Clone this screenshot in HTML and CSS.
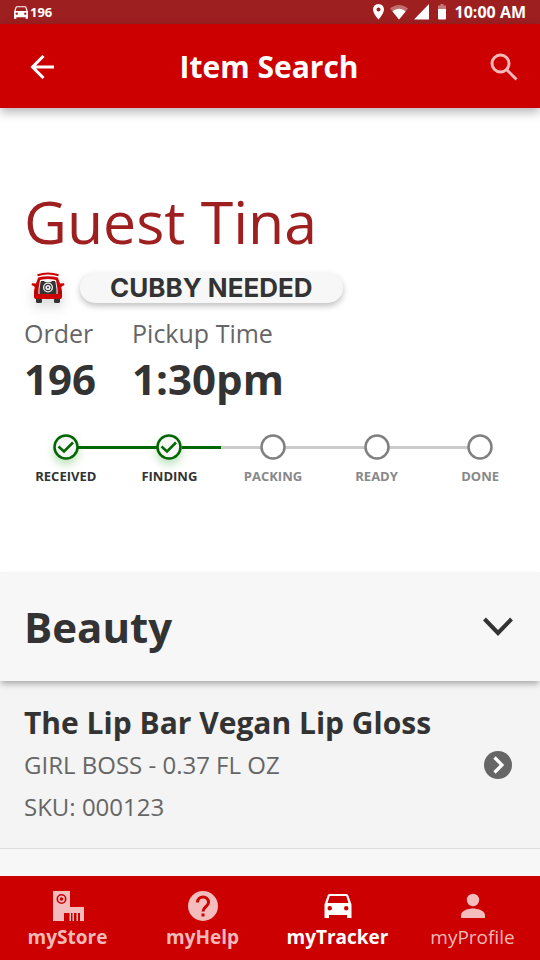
FILE: index.html
```html
<!DOCTYPE html>
<html lang="en">
<head>
<meta charset="utf-8">
<meta name="viewport" content="width=device-width, initial-scale=1">
<title>Item Search</title>
<link rel="stylesheet" href="styles.css">
</head>
<body>
<svg class="defs" aria-hidden="true">
  <symbol id="car" viewBox="0 0 24 24"><path fill-rule="evenodd" d="M18.9 5c-.2-.6-.8-1-1.400-1h-11c-.6 0-1.200.4-1.400 1L3 11v9h3v-2h12v2h3v-9L18.900 5zM6.500 15a1.500 1.500 0 1 1 0-3 1.500 1.500 0 0 1 0 3zm11 0a1.500 1.500 0 1 1 0-3 1.500 1.500 0 0 1 0 3zM5 10l1.500-4.700h11L19 10H5z"/></symbol>
</svg>
<div class="status">
  <span class="status-group"><svg class="status-car" viewBox="3 4 18 16"><use href="#car" width="24" height="24"/></svg><span class="status-order">196</span></span>
  <span class="status-group status-system">
    <span class="status-group status-signals">
      <svg width="11" height="16" viewBox="0 0 11 16"><path fill-rule="evenodd" d="M5.500 0A5.400 5.400 0 0 0 0 5.500C0 9.500 5.500 15.500 5.500 15.500S11 9.500 11 5.500A5.400 5.400 0 0 0 5.500 0zm0 7.500a2 2 0 1 1 0-4 2 2 0 0 1 0 4z"/></svg>
      <svg width="18" height="16" viewBox="0 0 18 16"><path opacity=".35" d="M0 4.500C5-.3 13-.3 18 4.500L9 15.500z"/><path d="M2.500 7.500c3.500-3.700 9.500-3.700 13 0l-6.500 8z"/></svg>
      <svg width="15" height="16" viewBox="0 0 15 16"><path d="M15 0v15.500H0z"/></svg>
    </span>
    <svg width="8" height="16" viewBox="0 0 8 16"><path opacity=".4" d="M2.500 0h3v1.500H8V5H0V1.500h2.500z"/><path d="M0 5h8v9.500q0 1-1 1H1q-1 0-1-1z"/></svg>
    <time class="clock">10:00 AM</time>
  </span>
</div>
<header class="appbar">
  <button class="icon-button" type="button" aria-label="Back"><svg width="24" height="24" viewBox="0 0 24 24" fill="none" stroke="#fff" stroke-width="3"><path d="M24 12H2M13.500 1 2.500 12l11 11"/></svg></button>
  <h1 class="appbar-title">Item Search</h1>
  <button class="icon-button" type="button" aria-label="Search"><svg width="28" height="28" viewBox="0 0 28 28" fill="none" stroke="#f4b9b9" stroke-width="3"><circle cx="10.500" cy="10.500" r="8.500"/><path d="m16.500 16.500 10 10"/></svg></button>
</header>
<main class="content">
  <section class="guest">
    <h2 class="guest-name">Guest Tina</h2>
    <div class="flags">
      <svg class="flag-car" width="48" height="32" viewBox="0 0 48 32" role="img" aria-label="Drive up">
        <path d="M13.500 3.300Q24-.5 34.500 3.300" fill="none" stroke="#c00" stroke-width="2"/>
        <path d="M12 25h6v4.500q0 1.500-1.500 1.500h-3q-1.500 0-1.500-1.500zM30 25h6v4.500q0 1.500-1.500 1.500h-3q-1.500 0-1.500-1.500z" fill="#333"/>
        <path d="M14.200 5.500Q24 2.800 33.800 5.500L36 11.500l4-.2.500 1.700-2.500 1.200-.8 1L38 19v6q0 2-2 2H12q-2 0-2-2v-6l.8-3.800-.8-1-2.500-1.200.5-1.700 4 .2z" fill="#c00"/>
        <path d="M16 8Q24 6 32 8l1.500 9v5h-19v-5z" fill="#f4f4f4"/>
        <path d="M16.500 10.500 17 9h3l1 1h6l1-1h3l.5 1.500 1 6.500v5h-17v-5z" fill="#333"/>
        <circle cx="24" cy="15.500" r="5" fill="#f4f4f4"/><circle cx="24" cy="15.500" r="3.700" fill="#333"/><circle cx="24" cy="15.500" r="2.600" fill="#f4f4f4"/><circle cx="24" cy="15.500" r="1" fill="#333"/>
        <path d="m11 18 2 1v3.500l-2-.5zm26 0-2 1v3.500l2-.5z" fill="#811"/>
      </svg>
      <span class="pill">CUBBY NEEDED</span>
    </div>
    <dl class="facts">
      <div><dt>Order</dt><dd>196</dd></div>
      <div><dt>Pickup Time</dt><dd>1:30pm</dd></div>
    </dl>
    <ol class="steps">
      <li class="step done"><svg class="dot" viewBox="0 0 26 26"><circle cx="13" cy="13" r="11.500"/><path d="m5.500 12.500 5.500 5 9-9"/></svg>RECEIVED</li>
      <li class="step done current"><svg class="dot" viewBox="0 0 26 26"><circle cx="13" cy="13" r="11.500"/><path d="m5.500 12.500 5.500 5 9-9"/></svg>FINDING</li>
      <li class="step"><svg class="dot" viewBox="0 0 26 26"><circle cx="13" cy="13" r="11.500"/></svg>PACKING</li>
      <li class="step"><svg class="dot" viewBox="0 0 26 26"><circle cx="13" cy="13" r="11.500"/></svg>READY</li>
      <li class="step"><svg class="dot" viewBox="0 0 26 26"><circle cx="13" cy="13" r="11.500"/></svg>DONE</li>
    </ol>
  </section>
  <section class="category">
    <h2 class="category-head"><button class="category-toggle" type="button" aria-expanded="true">Beauty<svg width="30" height="20" viewBox="0 0 30 20" fill="none" stroke="#333" stroke-width="4"><path d="m1.500 2 13.500 14L28.500 2"/></svg></button></h2>
    <a class="item" href="#item">
      <span class="item-text"><strong class="item-name">The Lip Bar Vegan Lip Gloss</strong><span>GIRL BOSS - 0.37 FL OZ</span><span>SKU: 000123</span></span>
      <svg width="28" height="28" viewBox="0 0 28 28" fill="none"><circle cx="14" cy="14" r="14" fill="#666"/><path d="m10.500 6.500 7.500 7.500-7.500 7.500" stroke="#fff" stroke-width="3.200"/></svg>
    </a>
  </section>
</main>
<nav class="tabs" aria-label="Main">
  <a class="tab" href="#store"><svg width="32" height="32" viewBox="0 0 32 32"><path fill-rule="evenodd" d="M1 1h17v16h14v14h-4v-8h-2v8h-1.500v-8H22v8h-1.500v-8H19v8h-1.500v-8H12v8H1zM9.500 4a5 5 0 1 0 0 10 5 5 0 0 0 0-10z"/><path fill-rule="evenodd" d="M9.500 5.600a3.400 3.400 0 1 0 0 6.800 3.400 3.400 0 0 0 0-6.800zm0 1.600a1.800 1.800 0 1 1 0 3.600 1.800 1.800 0 0 1 0-3.600z"/></svg>myStore</a>
  <a class="tab" href="#help"><svg width="32" height="32" viewBox="0 0 32 32"><circle cx="16" cy="16" r="15"/><path d="M10.500 12.500c0-7.500 11-7.500 11 0 0 4-5.500 4.500-5.500 9M16 23.500v3" fill="none" stroke="#c00" stroke-width="3"/></svg>myHelp</a>
  <a class="tab active" href="#tracker" aria-current="page"><svg width="36" height="32" viewBox="0 0 36 32"><use href="#car" x="0" y="-2" width="36" height="36"/></svg>myTracker</a>
  <a class="tab light" href="#profile"><svg width="32" height="32" viewBox="0 0 32 32"><circle cx="16" cy="10" r="6.200"/><path d="M4 28v-3c0-4.500 8-6.500 12-6.500s12 2 12 6.500v3z"/></svg>myProfile</a>
</nav>
</body>
</html>
```

FILE: styles.css
```css
* { box-sizing: border-box; }
body {
  margin: 0;
  min-height: 100vh;
  display: flex;
  flex-direction: column;
  background: #f7f7f7;
  color: #333;
  font-family: "Open Sans", "Noto Sans", sans-serif;
}
h1, h2, dl, dd, ol { margin: 0; padding: 0; }
button { border: 0; background: none; padding: 0; font: inherit; color: inherit; cursor: pointer; }
a { color: inherit; text-decoration: none; }
svg { display: block; flex: none; }
.defs { position: absolute; width: 0; height: 0; }

.status {
  height: 24px;
  padding: 0 14px;
  display: flex;
  justify-content: space-between;
  align-items: center;
  background: #9e1f20;
  color: #fff;
  fill: #fff;
  font-weight: 700;
}
.status-group { display: flex; align-items: center; gap: 2px; }
.status-car { width: 14px; height: 13px; }
.status-order { font-size: 13px; }
.status-system { gap: 9px; }
.status-signals { gap: 6px; }
.clock { font-size: 16px; }

.appbar {
  position: relative;
  height: 84px;
  padding: 1px 22px 0 20px;
  display: grid;
  grid-template-columns: 44px 1fr 44px;
  align-items: center;
  background: #c00;
  color: #fff;
  box-shadow: 0 4px 10px rgba(0, 0, 0, .3);
}
.appbar-title { font-size: 30px; line-height: 40px; text-align: center; }
.icon-button { width: 44px; height: 44px; display: grid; place-items: center; }
.appbar .icon-button:last-child { justify-items: end; }

.content { flex: 1; }
.guest { background: #fff; padding: 72px 0 87px; }
.guest-name { padding: 0 24px; font-size: 59px; line-height: 82px; font-weight: 400; color: #9e1f20; }
.flags { display: flex; align-items: center; gap: 8px; padding: 10px 24px 12px; }
.flag-car { filter: drop-shadow(0 6px 6px rgba(0, 0, 0, .15)); }
.pill {
  padding: 0 30px;
  border-radius: 15px;
  background: #f7f7f7;
  box-shadow: 0 3px 6px rgba(0, 0, 0, .25);
  font: 700 26px/30px Inter, "Liberation Sans", sans-serif;
}
.facts { display: flex; gap: 36px; padding: 0 24px; }
.facts dt { font-size: 25px; line-height: 34px; color: #666; }
.facts dd { font-size: 42px; line-height: 58px; font-weight: 700; }

.steps { display: flex; list-style: none; padding: 26px 8px 0 14px; }
.step {
  position: relative;
  flex: 1;
  display: flex;
  flex-direction: column;
  align-items: center;
  gap: 7px;
  font-size: 13px;
  line-height: 18px;
  font-weight: 700;
  color: #888;
}
.dot { position: relative; z-index: 1; width: 26px; height: 26px; fill: #fff; stroke: #808080; stroke-width: 2.5; }
.step + .step::before {
  content: "";
  position: absolute;
  top: 12px;
  left: -50%;
  width: 100%;
  height: 3px;
  background: #ccc;
}
.done { color: #333; }
.done .dot { fill: #f7f7f7; stroke: #060; filter: drop-shadow(0 5px 4px rgba(0, 140, 0, .25)); }
.step.done::before { background: #060; }
.current::after {
  content: "";
  position: absolute;
  z-index: 1;
  top: 12px;
  left: 62%;
  width: 38%;
  height: 3px;
  background: #060;
}
.category-head {
  position: relative;
  font-size: 42px;
  line-height: 58px;
  background: #f7f7f7;
  box-shadow: 0 4px 6px -1px rgba(0, 0, 0, .3);
}
.category-toggle {
  width: 100%;
  padding: 26px 27px 25px 24px;
  display: flex;
  align-items: center;
  justify-content: space-between;
  font-weight: 700;
}
.item {
  display: flex;
  align-items: center;
  justify-content: space-between;
  padding: 21px 28px 20px 24px;
  background: #f4f4f4;
  border-bottom: 1px solid #ddd;
}
.item-text { display: flex; flex-direction: column; font-size: 24px; line-height: 42px; color: #666; }
.item-name { font-size: 30px; color: #333; }

.tabs { display: flex; background: #c00; color: #f4b9b9; fill: #f4bcbc; }
.tab {
  flex: 1;
  height: 84px;
  padding-top: 14px;
  display: flex;
  flex-direction: column;
  align-items: center;
  gap: 2px;
  font-size: 19px;
  line-height: 26px;
  font-weight: 700;
}
.tab.active { color: #fff; fill: #fff; }
.tab.light { font-weight: 500; }
```
